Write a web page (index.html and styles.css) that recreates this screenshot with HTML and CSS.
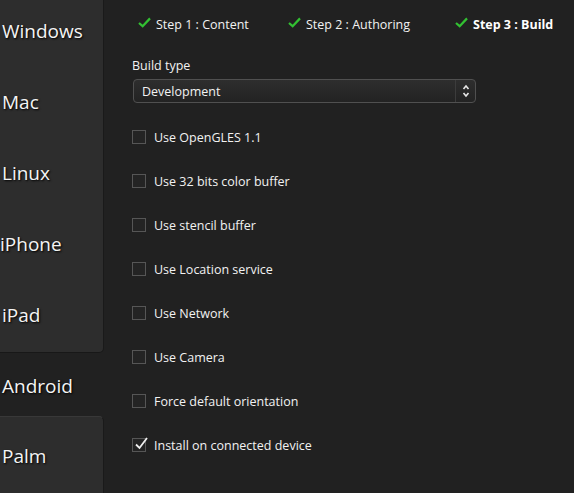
FILE: index.html
```html
<!DOCTYPE html>
<html lang="en">
<head>
    <meta charset="UTF-8">
    <title>Build</title>
    <link rel="stylesheet" href="styles.css">
</head>
<body>
    <div class="sidebar">
        <div class="tab-group top">
            <div class="tab">Windows</div>
            <div class="tab">Mac</div>
            <div class="tab">Linux</div>
            <div class="tab">iPhone</div>
            <div class="tab">iPad</div>
        </div>
        <div class="tab current">Android</div>
        <div class="tab-group bottom">
            <div class="tab">Palm</div>
        </div>
    </div>

    <div class="main">
        <div class="steps">
            <div class="step step-1">
                <svg class="check" viewBox="0 0 14 12"><path d="M1 6.5 L5 10 L13 1.5" /></svg>
                Step 1 : Content
            </div>
            <div class="step step-2">
                <svg class="check" viewBox="0 0 14 12"><path d="M1 6.5 L5 10 L13 1.5" /></svg>
                Step 2 : Authoring
            </div>
            <div class="step step-3 active">
                <svg class="check" viewBox="0 0 14 12"><path d="M1 6.5 L5 10 L13 1.5" /></svg>
                Step 3 : Build
            </div>
        </div>

        <div class="field">
            <div class="field-label">Build type</div>
            <div class="select">
                <span class="select-value">Development</span>
                <span class="select-arrows">
                    <svg viewBox="0 0 8 14"><path d="M1.5 5 L4 2 L6.5 5 M1.5 9 L4 12 L6.5 9" /></svg>
                </span>
            </div>
        </div>

        <div class="options">
            <div class="option"><span class="box"></span>Use OpenGLES 1.1</div>
            <div class="option"><span class="box"></span>Use 32 bits color buffer</div>
            <div class="option"><span class="box"></span>Use stencil buffer</div>
            <div class="option"><span class="box"></span>Use Location service</div>
            <div class="option"><span class="box"></span>Use Network</div>
            <div class="option"><span class="box"></span>Use Camera</div>
            <div class="option"><span class="box"></span>Force default orientation</div>
            <div class="option"><span class="box checked"><svg viewBox="0 0 14 14"><path d="M2 7.5 L5.5 11 L13 1" /></svg></span>Install on connected device</div>
        </div>
    </div>
</body>
</html>
```

FILE: styles.css
```css
body {
    margin: 0;
    padding: 0;
    background-color: #212121;
    color: #f2f2f2;
    font-family: 'Open Sans', 'Noto Sans', sans-serif;
    font-size: 12.5px;
    display: flex;
    height: 493px;
    overflow: hidden;
}
.sidebar {
    width: 104px;
    flex-shrink: 0;
    display: flex;
    flex-direction: column;
    margin-top: -3px;
}
.tab-group {
    background-color: #2d2d2d;
    border-right: 1px solid #1a1a1a;
}
.tab-group.top {
    border-bottom: 1px solid #181818;
    border-bottom-right-radius: 5px;
}
.tab-group.bottom {
    flex: 1;
    border-top: 1px solid #383838;
    border-top-right-radius: 5px;
}
.tab {
    height: 71px;
    line-height: 68px;
    padding-left: 2px;
    font-size: 19px;
    color: #f4f4f4;
    text-shadow: 1px 1px 2px #000;
    white-space: nowrap;
}
.tab-group.top .tab:nth-child(4) {
    padding-left: 0;
}
.tab.current {
    height: 63px;
    line-height: 66px;
}
.tab-group.bottom .tab {
    padding-top: 5px;
}
.main {
    flex: 1;
    padding: 0 0 0 28px;
}
.steps {
    display: flex;
    height: 48px;
    align-items: center;
    padding-left: 6px;
}
.step {
    display: flex;
    align-items: center;
    gap: 5px;
    white-space: nowrap;
}
.step-1 {
    width: 150px;
}
.step-2 {
    width: 167px;
}
.step.active {
    font-weight: bold;
    color: #ffffff;
}
.check {
    width: 13px;
    height: 11px;
    margin-top: -3px;
}
.check path {
    fill: none;
    stroke: #32c032;
    stroke-width: 2.4;
}
.field {
    margin-top: 9px;
}
.field-label {
    margin-bottom: 5px;
}
.select {
    width: 341px;
    height: 22px;
    margin-left: 1px;
    border: 1px solid #505050;
    border-radius: 4px;
    background: linear-gradient(#2e2e2e, #232323);
    display: flex;
    align-items: center;
}
.select-value {
    flex: 1;
    padding-left: 8px;
}
.select-arrows {
    width: 19px;
    height: 100%;
    border-left: 1px solid #3c3c3c;
    display: flex;
    align-items: center;
    justify-content: center;
}
.select-arrows svg {
    width: 8px;
    height: 14px;
}
.select-arrows path {
    fill: none;
    stroke: #e6e6e6;
    stroke-width: 1.6;
}
.options {
    margin-top: 12px;
}
.option {
    display: flex;
    align-items: center;
    height: 44px;
    gap: 8px;
}
.box {
    width: 12px;
    height: 12px;
    border: 1px solid #565656;
    background-color: #242424;
    position: relative;
}
.box svg {
    position: absolute;
    left: 1px;
    top: -2px;
    width: 14px;
    height: 14px;
}
.box path {
    fill: none;
    stroke: #f0f0f0;
    stroke-width: 1.8;
}
```
